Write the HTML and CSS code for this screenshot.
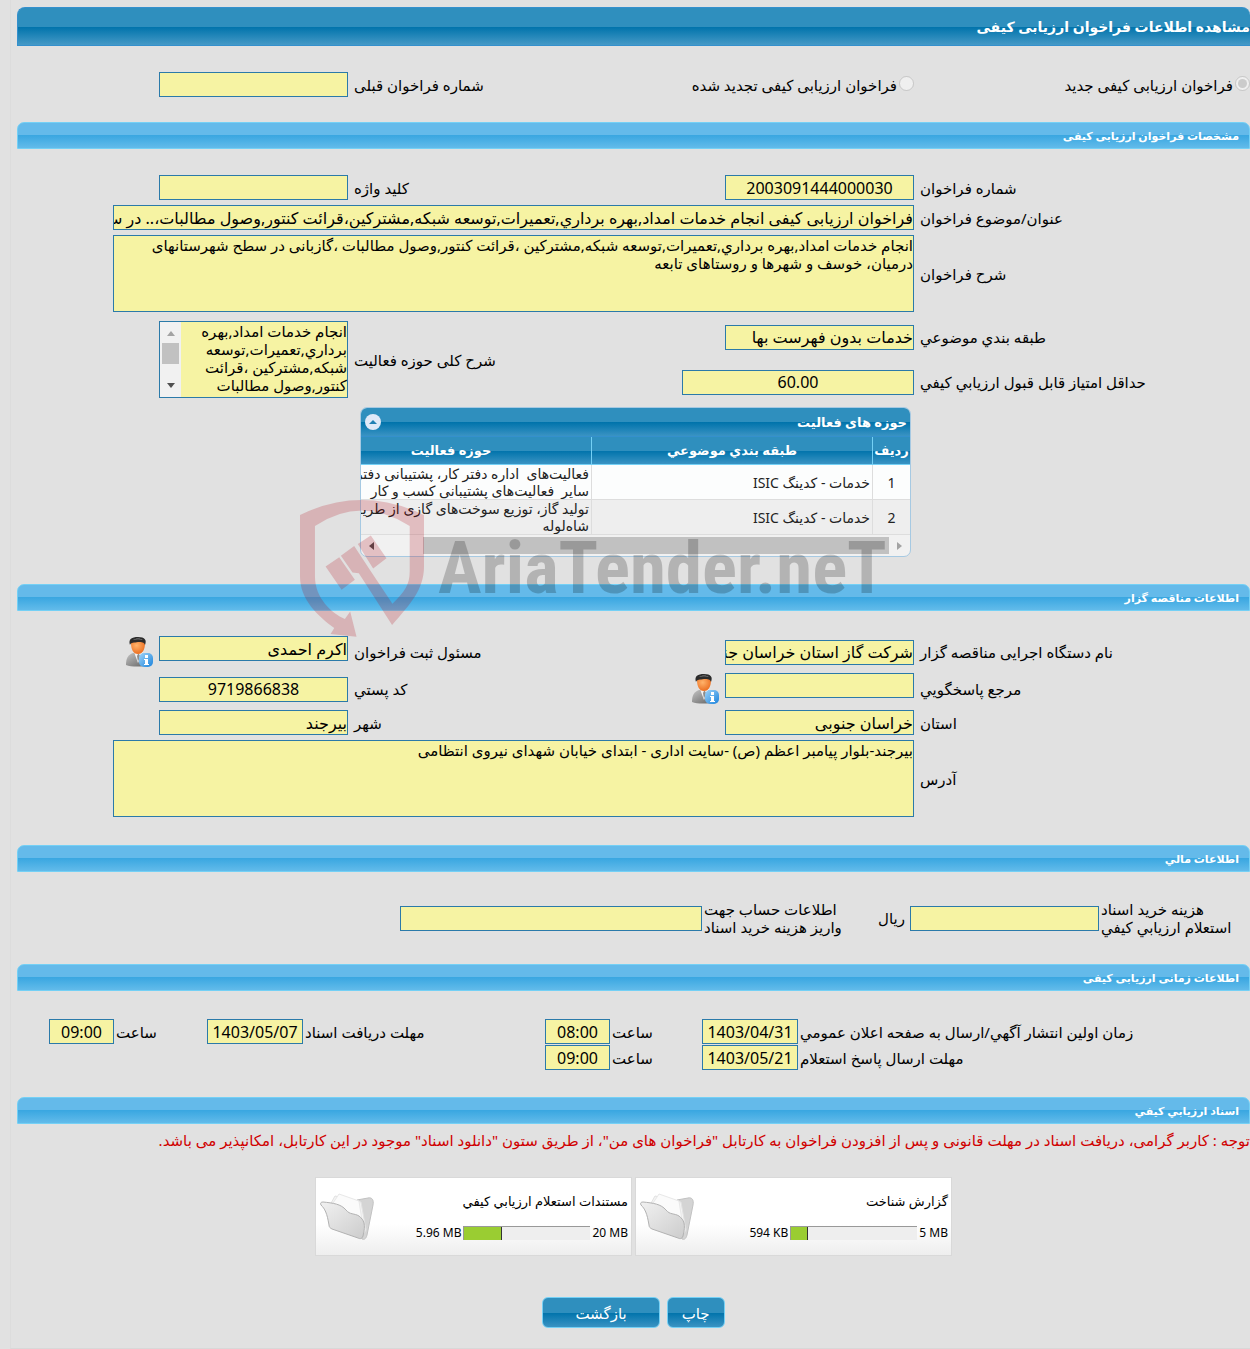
FILE: index.html
```html
<!DOCTYPE html>
<html lang="fa" dir="rtl">
<head>
    <meta charset="UTF-8">
    <title>مشاهده اطلاعات فراخوان ارزیابی کیفی</title>
    <link rel="stylesheet" href="styles.css">
</head>
<body>

<!-- shared icons -->
<svg class="defs" width="0" height="0" aria-hidden="true">
    <defs>
        <linearGradient id="suit" x1="0" y1="0" x2="1" y2="1">
            <stop offset="0" stop-color="#c4c4c4"/><stop offset="1" stop-color="#606060"/>
        </linearGradient>
        <radialGradient id="face" cx=".4" cy=".35" r=".7">
            <stop offset="0" stop-color="#ffb36b"/><stop offset="1" stop-color="#ea6a1c"/>
        </radialGradient>
        <linearGradient id="info" x1="0" y1="0" x2="1" y2="1">
            <stop offset="0" stop-color="#9fd4f8"/><stop offset="1" stop-color="#1b83dc"/>
        </linearGradient>
        <linearGradient id="front" x1="0" y1="0" x2="1" y2="1">
            <stop offset="0" stop-color="#f1f1f1"/><stop offset="1" stop-color="#cccccc"/>
        </linearGradient>
    </defs>
    <symbol id="user" viewBox="0 0 32 32">
        <path d="M3 29c0-7 2-10 7-12h9c4 2 6 5 6 12-5 2-17 2-22 0z" fill="url(#suit)"/>
        <path d="M11 16l4 11 5-11z" fill="#f4f4f4"/>
        <path d="M15 18l-1 2 1 6 2-6-1-2z" fill="#8d8d8d"/>
        <path d="M8 7c0-3 15-3 14 0 0 6-2 11-7 11S8 13 8 7z" fill="url(#face)"/>
        <path d="M7 9C5 3 9 1 15 1c7 0 9 3 7 8-1-3-3-3-7-3-4 1-7 0-8 3z" fill="#2b2b2b"/>
        <path d="M10 4c3-2 7-2 10 0-3-1-7-1-10 0z" fill="#8a8a8a"/>
        <rect x="16" y="17" width="14" height="14" rx="5" fill="url(#info)"/>
        <path d="M22 19h3v3h-3zM21 23h4v5h1v1h-5v-1h1v-4h-1z" fill="#fff"/>
    </symbol>
    <symbol id="folder" viewBox="0 0 56 52">
        <path d="M38 9l11-2c4-1 6 2 5 7L48 44c-1 4-3 5-5 4z" fill="#d4d4d4" stroke="#c2c2c2"/>
        <path d="M11 14l5-9 26 6 5 28-4 6z" fill="#f4f4f4" stroke="#e2e2e2"/>
        <path d="M14 12l6-9 20 7 4 26z" fill="#fbfbfb" stroke="#e8e8e8"/>
        <path d="M2 14c-1-2 0-3 2-3 10 1 18 2 23 8 4 5 8 3 13 6 5 4 7 8 4 20-1 3-3 3-5 2L13 38c-2-1-3-2-3-4C8 22 6 18 2 14z" fill="url(#front)" stroke="#b2b2b2"/>
    </symbol>
</svg>

<div class="page">
    <h1 class="title">مشاهده اطلاعات فراخوان ارزیابی کیفی</h1>

    <div class="form form_type">
        <label class="radio"><input type="radio" name="type" checked disabled><span>فراخوان ارزیابی کیفی جدید</span></label>
        <label class="radio"><input type="radio" name="type" disabled><span>فراخوان ارزیابی کیفی تجدید شده</span></label>
        <label class="lbl" for="prev">شماره فراخوان قبلی</label>
        <div><input class="txt" id="prev" readonly></div>
    </div>

    <h2 class="bar">مشخصات فراخوان ارزیابی کیفی</h2>
    <div class="form form_spec">
        <label class="lbl" for="num">شماره فراخوان</label>
        <div><input class="txt num" id="num" value="2003091444000030" readonly></div>
        <label class="lbl" for="key">کلید واژه</label>
        <div><input class="txt" id="key" readonly></div>

        <label class="lbl first" for="subject">عنوان/موضوع فراخوان</label>
        <div class="wide"><input class="txt" id="subject" value="فراخوان ارزیابی کیفی انجام خدمات امداد,بهره برداري,تعمیرات,توسعه شبکه,مشترکین،قرائت کنتور,وصول مطالبات،.. در سطح شهرستانهای درمیان" readonly></div>

        <label class="lbl first" for="desc">شرح فراخوان</label>
        <div class="wide"><textarea class="area" id="desc" readonly>انجام خدمات امداد,بهره برداري,تعمیرات,توسعه شبکه,مشترکین ،قرائت کنتور,وصول مطالبات ،گازبانی در سطح شهرستانهای
درمیان، خوسف و شهرها و روستاهای تابعه</textarea></div>

        <label class="lbl first tall" for="cat">طبقه بندي موضوعي</label>
        <div class="second"><input class="txt" id="cat" value="خدمات بدون فهرست بها" readonly></div>
        <label class="lbl two_rows" for="scope">شرح کلی حوزه فعالیت</label>
        <div class="two_rows">
            <div class="scroll_box">
                <textarea class="area" id="scope" readonly>انجام خدمات امداد,بهره
برداري,تعمیرات,توسعه
شبکه,مشترکین ،قرائت
کنتور,وصول مطالبات</textarea>
                <div class="vscroll"><i class="arrow up"></i><b></b><i class="arrow down"></i></div>
            </div>
        </div>
        <label class="lbl first tall" for="score">حداقل امتیاز قابل قبول ارزیابي کیفي</label>
        <div class="second"><input class="txt num score" id="score" value="60.00" readonly></div>

        <div class="panel">
            <div class="panel_head">
                <span>حوزه های فعالیت</span>
                <button class="fold" aria-label="بستن"></button>
            </div>
            <table class="list">
                <tr><th class="c1">ردیف</th><th class="c2">طبقه بندي موضوعي</th><th class="c3">حوزه فعالیت</th></tr>
                <tr>
                    <td class="c1">1</td><td>خدمات - کدینگ ISIC</td>
                    <td><div class="clip">فعالیت‌های&nbsp; اداره دفتر کار، پشتیبانی دفتر و<br>سایر&nbsp; فعالیت‌های پشتیبانی کسب و کار</div></td>
                </tr>
                <tr>
                    <td class="c1">2</td><td>خدمات - کدینگ ISIC</td>
                    <td><div class="clip">تولید گاز، توزیع سوخت‌های گازی از طریق<br>شاه‌لوله</div></td>
                </tr>
            </table>
            <div class="hscroll"><i class="arrow right"></i><b></b><i class="arrow left"></i></div>
        </div>
    </div>

    <h2 class="bar">اطلاعات مناقصه گزار</h2>
    <div class="form form_org">
        <label class="lbl" for="org">نام دستگاه اجرایی مناقصه گزار</label>
        <div><input class="txt" id="org" value="شرکت گاز استان خراسان جنوبی" readonly></div>
        <label class="lbl" for="resp">مسئول ثبت فراخوان</label>
        <div class="with_icon"><input class="txt" id="resp" value="اکرم احمدی" readonly><svg class="user"><use href="#user"/></svg></div>

        <label class="lbl" for="ref">مرجع پاسخگویي</label>
        <div class="with_icon"><input class="txt" id="ref" readonly><svg class="user"><use href="#user"/></svg></div>
        <label class="lbl" for="post">کد پستي</label>
        <div><input class="txt num" id="post" value="9719866838" readonly></div>

        <label class="lbl" for="state">استان</label>
        <div><input class="txt" id="state" value="خراسان جنوبی" readonly></div>
        <label class="lbl" for="city">شهر</label>
        <div><input class="txt" id="city" value="بیرجند" readonly></div>

        <label class="lbl" for="addr">آدرس</label>
        <div class="wide"><textarea class="area" id="addr" readonly>بیرجند-بلوار پیامبر اعظم (ص) -سایت اداری - ابتدای خیابان شهدای نیروی انتظامی</textarea></div>
    </div>

    <h2 class="bar">اطلاعات مالي</h2>
    <div class="money">
        <label class="lbl" for="price">هزینه خرید اسناد<br>استعلام ارزیابي کیفي</label>
        <input class="txt" id="price" readonly>
        <span class="unit">ریال</span>
        <label class="lbl lbl_acc" for="acc">اطلاعات حساب جهت<br>واریز هزینه خرید اسناد</label>
        <input class="txt acc" id="acc" readonly>
    </div>

    <h2 class="bar">اطلاعات زمانی ارزیابی کیفی</h2>
    <div class="dates">
        <label class="lbl" for="d1">زمان اولین انتشار آگهي/ارسال به صفحه اعلان عمومي</label>
        <input class="txt num" id="d1" value="1403/04/31" readonly>
        <label class="lbl" for="t1">ساعت</label>
        <input class="txt num" id="t1" value="08:00" readonly>
        <label class="lbl" for="d2">مهلت دریافت اسناد</label>
        <input class="txt num" id="d2" value="1403/05/07" readonly>
        <label class="lbl" for="t2">ساعت</label>
        <input class="txt num" id="t2" value="09:00" readonly>
        <label class="lbl first" for="d3">مهلت ارسال پاسخ استعلام</label>
        <input class="txt num" id="d3" value="1403/05/21" readonly>
        <label class="lbl" for="t3">ساعت</label>
        <input class="txt num" id="t3" value="09:00" readonly>
    </div>

    <h2 class="bar">اسناد ارزیابي کیفي</h2>
    <p class="note">توجه : کاربر گرامی، دریافت اسناد در مهلت قانونی و پس از افزودن فراخوان به کارتابل "فراخوان های من"، از طریق ستون "دانلود اسناد" موجود در این کارتابل، امکانپذیر می باشد.</p>

    <div class="docs">
        <div class="doc">
            <div class="doc_info">
                <div class="name">گزارش شناخت</div>
                <div class="size"><span dir="ltr">5 MB</span><div class="meter"><div style="width: 13%"></div></div><span dir="ltr">594 KB</span></div>
            </div>
            <svg class="folder"><use href="#folder"/></svg>
        </div>
        <div class="doc">
            <div class="doc_info">
                <div class="name">مستندات استعلام ارزیابي کیفي</div>
                <div class="size"><span dir="ltr">20 MB</span><div class="meter"><div style="width: 30%"></div></div><span dir="ltr">5.96 MB</span></div>
            </div>
            <svg class="folder"><use href="#folder"/></svg>
        </div>
    </div>

    <div class="buttons">
        <button class="btn">چاپ</button>
        <button class="btn btn_back">بازگشت</button>
    </div>

    <!-- watermark over the form -->
    <div class="mark" aria-hidden="true">
        <svg class="shield" viewBox="30 300 373 412">
            <path d="M30 345Q215 255 403 345V500C403 570 360 615 307 676L207 520L188 518L153 468L193 438L240 510L308 612C345 575 360 555 360 515V378Q215 285 75 378V530C75 595 125 640 165 658L181 635L200 711L122 703L133 685C85 650 30 600 30 530Z"/>
            <path d="M107 500L148 472L195 540L155 570ZM204 432L243 407L290 475L250 506Z"/>
        </svg>
        <span>AriaTender.neT</span>
    </div>
</div>

</body>
</html>
```
FILE: styles.css
```css
body{
    margin: 0;
    background: #e1e1e1;
    color: #000;
    font-family: "Noto Sans", "DejaVu Sans", sans-serif;
    font-size: 15px;
    line-height: 18px;
    overflow-x: hidden;
}
.defs{ position: absolute; }
.page{
    position: relative;
    margin-left: 10px;
    padding: 7px 0 20px 6px;
    border-left: 1px solid #dcdcdc;
    border-bottom: 1px solid #d8d8d8;
    box-sizing: border-box;
}
input,textarea,button{
    font-family: inherit;
    margin: 0;
    box-sizing: border-box;
}

/* bars */
.title{
    box-sizing: border-box;
    height: 39px;
    margin: 0;
    line-height: 37px;
    font-size: 14px;
    color: white;
    border: 1px solid #3490cd;
    border-right: 0;
    border-radius: 8px 8px 0 0;
    background: linear-gradient(#2f8fbe 50%, #0073ab 51%, #4599c6);
}
.bar{
    box-sizing: border-box;
    height: 27px;
    margin: 0;
    padding: 0 10px;
    line-height: 26px;
    font-size: 11px;
    color: white;
    border: 1px solid #74d0f5;
    border-radius: 7px 7px 0 0;
    background: linear-gradient(#64baea 48%, #3aa7e1 50%, #62bbea);
}

/* forms */
.form{
    display: grid;
    grid-template-columns: minmax(0,336fr) minmax(0,232fr) minmax(0,334fr) minmax(0,331fr);
    align-items: center;
    row-gap: 5px;
}
.form_type{ padding: 26px 0 25px; }
.form_spec{ padding: 26px 0 27px; }
.form_org{ padding: 25px 0 28px; }
.lbl{
    text-align: left;
    padding-left: 6px;
}
.first{ grid-column: 1; }
.second{ grid-column: 2; }
.wide{ grid-column: 2 / 4; }
.two_rows{ grid-row: 4 / 6; }
.lbl.two_rows{ grid-column: 3; }
div.two_rows{ grid-column: 4; }
.tall{ line-height: 40px; }
.txt{
    display: block;
    width: 189px;
    height: 25px;
    padding: 0;
    font-size: 16px;
    color: black;
    background: #f6f3a3;
    border: 1px solid #2b7aa9;
    border-radius: 0;
    outline: none;
}
.num{ text-align: center; }
.score{ width: 232px; }
.area{
    display: block;
    width: 100%;
    height: 77px;
    padding: 0;
    font-size: 15px;
    line-height: 18px;
    color: black;
    background: #f6f3a3;
    border: 1px solid #2b7aa9;
    outline: none;
    resize: none;
    overflow: hidden;
}
.wide .txt,.wide .area{ width: 801px; }
.radio{
    display: flex;
    align-items: flex-start;
    gap: 2px;
    white-space: nowrap;
}
.radio input{
    width: 15px;
    height: 15px;
}
.with_icon{
    display: flex;
    align-items: flex-start;
    gap: 4px;
}
.user{
    width: 32px;
    height: 32px;
}

/* text box with a scroll bar */
.scroll_box{
    display: flex;
    width: 189px;
    height: 77px;
    box-sizing: border-box;
    border: 1px solid #2b7aa9;
}
.scroll_box .area{
    flex: 1;
    height: 75px;
    border: 0;
}
.vscroll{
    display: flex;
    flex-direction: column;
    align-items: center;
    width: 21px;
    padding: 9px 0;
    box-sizing: border-box;
    background: #f1f1f1;
}
.vscroll b{
    width: 17px;
    height: 21px;
    margin: 7px 0 auto;
    background: #c1c1c1;
}
.arrow{ border: 4px solid transparent; }
.up{ border-top: 0; border-bottom: 5px solid #a3a3a3; }
.down{ border-bottom: 0; border-top: 5px solid #505050; }
.left{ border-left: 0; border-right: 5px solid #505050; }
.right{ border-right: 0; border-left: 5px solid #a3a3a3; }

/* list panel */
.panel{
    grid-column: 2 / 4;
    box-sizing: border-box;
    width: 551px;
    margin-right: 3px;
    border: 1px solid #a6c9e2;
    border-radius: 7px;
    overflow: hidden;
    background: #f1f1f1;
}
.panel_head{
    display: flex;
    justify-content: space-between;
    align-items: center;
    height: 28px;
    padding: 0 3px 0 4px;
    font-size: 13px;
    font-weight: bold;
    color: white;
    background: linear-gradient(#2f8fbe 50%, #0073ab 51%, #3a93c3);
    border-bottom: 1px solid #3490cd;
}
.fold{
    display: flex;
    justify-content: center;
    align-items: center;
    width: 16px;
    height: 16px;
    padding: 0;
    border: 0;
    border-radius: 8px;
    background: #dfe9f8;
}
.fold::after{
    content: "";
    border: 4px solid transparent;
    border-top: 0;
    border-bottom-color: #2180b4;
}
.list{
    width: 100%;
    table-layout: fixed;
    border-collapse: collapse;
    font-size: 14px;
    line-height: 17px;
    color: #222;
}
.list th{
    height: 27px;
    padding: 0;
    font-size: 13px;
    color: white;
    background: linear-gradient(#2f8fbe 50%, #0073ab 51%, #3a93c3);
    border-left: 1px solid #74d0f5;
    border-bottom: 1px solid #74d0f5;
}
.list td{
    height: 34px;
    padding: 0 2px;
    background: #fcfdfd;
    border-left: 1px solid #ddd;
    border-bottom: 1px solid #ddd;
}
.list tr:last-child td{ background: #eee; }
.list th:last-child,.list td:last-child{ border-left: 0; }
.list td:last-child{ padding-left: 0; }
.list .c1{ width: 37px; text-align: center; padding: 0; }
.list .c2{ width: 280px; }
.list .c3{ padding-right: 50px; }
.clip{
    white-space: nowrap;
    overflow: hidden;
}
.hscroll{
    display: flex;
    align-items: center;
    height: 21px;
    padding: 0 8px;
}
.hscroll b{
    width: 466px;
    height: 17px;
    margin: 0 8px 0 auto;
    background: #c1c1c1;
}

/* money */
.money{
    display: flex;
    align-items: center;
    padding: 28px 0;
}
.money .lbl{
    flex: 0 0 151px;
    box-sizing: border-box;
    padding-left: 2px;
}
.money .lbl_acc{ flex-basis: 179px; }
.unit{
    width: 24px;
    margin-right: 5px;
}
.money .acc{ width: 302px; }

/* dates */
.dates{
    display: grid;
    grid-template-columns: 452fr 96px 92fr 65px 242fr 96px 93fr 65px 32fr;
    align-items: center;
    row-gap: 1px;
    padding: 28px 0 27px;
}
.dates .lbl{ padding-left: 2px; white-space: nowrap; }
.dates .txt{ width: 100%; }

.note{
    margin: 0;
    padding: 7px 0 0;
    color: #d00000;
    white-space: nowrap;
}

/* documents */
.docs{
    display: flex;
    justify-content: center;
    gap: 3px;
    padding: 28px 0 41px;
}
.doc{
    display: flex;
    align-items: center;
    justify-content: space-between;
    box-sizing: border-box;
    width: 317px;
    height: 79px;
    padding: 0 3px;
    font-size: 12px;
    border: 1px solid #d9d9d9;
    background: linear-gradient(white 60%, #eee);
}
.name{
    margin-bottom: 14px;
    font-size: 13px;
}
.size{
    display: flex;
    align-items: center;
    gap: 2px;
}
.meter{
    width: 127px;
    height: 14px;
    box-sizing: border-box;
    direction: ltr;
    background: #eee;
    border-top: 1px solid #999;
    border-left: 1px solid #999;
}
.meter div{
    height: 13px;
    box-sizing: border-box;
    background: #9acd32;
    border-right: 1px solid #333;
}
.folder{
    width: 56px;
    height: 52px;
}

.buttons{
    display: flex;
    justify-content: center;
    gap: 7px;
}
.btn{
    height: 31px;
    padding: 0 14px;
    font-size: 15px;
    color: white;
    border: 1px solid #74d0f5;
    border-radius: 6px;
    background: linear-gradient(#2f8fbe 50%, #0073ab 51%, #3a93c3);
}
.btn_back{ padding: 0 32px; }

.mark{
    position: absolute;
    top: 500px;
    left: 289px;
    display: flex;
    direction: ltr;
    gap: 14px;
    color: #000;
    opacity: .2;
    pointer-events: none;
}
.shield{
    width: 124px;
    height: 137px;
    fill: #b00010;
}
.mark span{
    font: bold 73px/137px "Roboto Condensed", "Lato", sans-serif;
}
```
